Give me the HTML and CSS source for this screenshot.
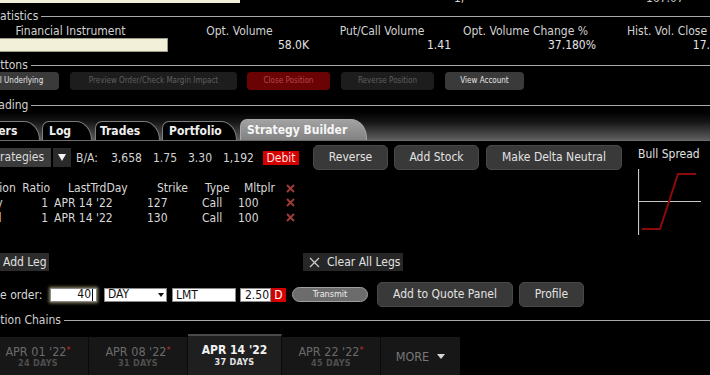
FILE: index.html
```html
<!DOCTYPE html>
<html>
<head>
<meta charset="utf-8">
<link rel="stylesheet" href="styles.css">
</head>
<body>
<div class="page">
  <div class="topstrip">
    <div class="cream-top"></div>
    <span class="top-clip tc1">1,</span>
    <span class="top-clip tc2">167.07</span>
  </div>

  <div class="section-head h-stats"><span class="sh-label">Statistics</span><span class="sh-line"></span></div>
  <div class="stats">
    <div class="st-h">Financial Instrument</div>
    <div class="st-h">Opt. Volume</div>
    <div class="st-h">Put/Call Volume</div>
    <div class="st-h">Opt. Volume Change %</div>
    <div class="st-h">Hist. Vol. Close</div>
    <div class="st-v"><div class="cream-field"></div></div>
    <div class="st-v">58.0K</div>
    <div class="st-v">1.41</div>
    <div class="st-v">37.180%</div>
    <div class="st-v">17.52%</div>
  </div>

  <div class="section-head h-buttons"><span class="sh-label">Buttons</span><span class="sh-line"></span></div>
  <div class="action-row">
    <div class="abtn abtn-on b1">Sell Underlying</div>
    <div class="abtn abtn-off b2">Preview Order/Check Margin Impact</div>
    <div class="abtn abtn-red b3">Close Position</div>
    <div class="abtn abtn-off b4">Reverse Position</div>
    <div class="abtn abtn-on b5">View Account</div>
  </div>

  <div class="section-head h-trading"><span class="sh-label">Trading</span><span class="sh-line"></span></div>
  <div class="tabstrip">
    <div class="tab t-orders">Orders</div>
    <div class="tab t-log">Log</div>
    <div class="tab t-trades">Trades</div>
    <div class="tab t-port">Portfolio</div>
    <div class="tab tab-active t-sb">Strategy Builder</div>
  </div>

  <div class="builder">
    <div class="builder-left">
      <div class="strat-row">
        <div class="strat-select">Strategies</div>
        <div class="strat-arrow"><span class="tri-white"></span></div>
        <span class="ba ba-label">B/A:</span>
        <span class="ba ba-1">3,658</span>
        <span class="ba ba-2">1.75</span>
        <span class="ba ba-3">3.30</span>
        <span class="ba ba-4">1,192</span>
        <span class="debit">Debit</span>
        <div class="sbtn s-rev">Reverse</div>
        <div class="sbtn s-add">Add Stock</div>
        <div class="sbtn s-mdn">Make Delta Neutral</div>
      </div>
      <div class="legs">
        <div class="lh c-act">Action</div>
        <div class="lh c-ratio">Ratio</div>
        <div class="lh c-date">LastTrdDay</div>
        <div class="lh c-strike">Strike</div>
        <div class="lh c-type">Type</div>
        <div class="lh c-mlt">Mltplr</div>
        <div class="lh c-x"><svg class="xicon" viewBox="0 0 9 9"><path d="M1 1L8 8M8 1L1 8"/></svg></div>

        <div class="lv c-act">Buy</div>
        <div class="lv c-ratio">1</div>
        <div class="lv c-date">APR 14 '22</div>
        <div class="lv c-strike">127</div>
        <div class="lv c-type">Call</div>
        <div class="lv c-mlt">100</div>
        <div class="lv c-x"><svg class="xicon" viewBox="0 0 9 9"><path d="M1 1L8 8M8 1L1 8"/></svg></div>

        <div class="lv c-act">Sell</div>
        <div class="lv c-ratio">1</div>
        <div class="lv c-date">APR 14 '22</div>
        <div class="lv c-strike">130</div>
        <div class="lv c-type">Call</div>
        <div class="lv c-mlt">100</div>
        <div class="lv c-x"><svg class="xicon" viewBox="0 0 9 9"><path d="M1 1L8 8M8 1L1 8"/></svg></div>
      </div>
    </div>
    <div class="builder-right">
      <div class="bull-label">Bull Spread</div>
      <svg class="payoff" width="64" height="66" viewBox="0 0 64 66">
        <line x1="0.5" y1="0" x2="0.5" y2="66" stroke="#c8c8c8" stroke-width="1.2"/>
        <line x1="0" y1="32.5" x2="63" y2="32.5" stroke="#c8c8c8" stroke-width="1.2"/>
        <polyline points="4,60 22,60 40,5 58,5" fill="none" stroke="#8e0a0a" stroke-width="2"/>
      </svg>
    </div>
  </div>

  <div class="leg-actions">
    <div class="addleg">Add Leg</div>
    <div class="clearlegs"><svg class="clr-x" viewBox="0 0 11 11"><path d="M1 1L10 10M10 1L1 10"/></svg><span>Clear All Legs</span></div>
  </div>

  <div class="order-row">
    <span class="order-label">Place order:</span>
    <div class="fld fld-qty">40<span class="caret"></span></div>
    <div class="fld fld-tif">DAY<span class="tri-black"></span></div>
    <div class="fld fld-type">LMT</div>
    <div class="fld fld-price">2.50</div><div class="fld-d">D</div>
    <div class="transmit">Transmit</div>
    <div class="sbtn o-quote">Add to Quote Panel</div>
    <div class="sbtn o-profile">Profile</div>
  </div>

  <div class="section-head h-chains"><span class="sh-label">Option Chains</span><span class="sh-line"></span></div>

  <div class="exp-tabs">
    <div class="exp e1"><div class="exp-date">APR 01 '22<span class="ast">*</span></div><div class="exp-days">24 DAYS</div></div>
    <div class="exp e2"><div class="exp-date">APR 08 '22<span class="ast">*</span></div><div class="exp-days">31 DAYS</div></div>
    <div class="exp exp-active e3"><div class="exp-date">APR 14 '22</div><div class="exp-days">37 DAYS</div></div>
    <div class="exp e4"><div class="exp-date">APR 22 '22<span class="ast">*</span></div><div class="exp-days">45 DAYS</div></div>
    <div class="exp exp-more e5">MORE<span class="tri-more"></span></div>
  </div>
</div>
</body>
</html>
```

FILE: styles.css
```css
html, body {
  margin: 0;
  padding: 0;
}
body {
  background: #000;
  width: 710px;
  height: 375px;
  overflow: hidden;
  font-family: "DejaVu Sans Condensed", "DejaVu Sans", sans-serif;
  font-stretch: condensed;
  font-size: 12px;
  color: #d8d8d8;
}
.page {
  width: 710px;
  display: flex;
  flex-direction: column;
}

/* top clipped strip */
.topstrip {
  height: 4px;
  overflow: hidden;
  display: flex;
  align-items: flex-end;
}
.cream-top {
  align-self: flex-start;
  width: 240px;
  height: 3px;
  background: #f3f0d9;
  flex: none;
}
.top-clip {
  line-height: 12px;
  color: #cfcfcf;
  flex: none;
}
.tc1 { margin-left: 214px; width: 20px; }
.tc2 { margin-left: 172px; }

/* section headings */
.section-head {
  display: flex;
  align-items: center;
  height: 14px;
}
.sh-label {
  line-height: 14px;
  color: #d0d0d0;
  white-space: nowrap;
  flex: none;
}
.sh-line {
  flex: 1;
  height: 1px;
  background: #a9a9a9;
  margin-left: 3px;
}
.h-stats { margin-top: 5px; }
.h-stats .sh-label { margin-left: -11px; }
.h-buttons { margin-top: 6px; }
.h-buttons .sh-label { margin-left: -14px; }
.h-trading { margin-top: 8px; }
.h-trading .sh-label { margin-left: -11px; }
.h-chains { margin-top: 6px; }
.h-chains .sh-label { margin-left: -15px; }

/* statistics */
.stats {
  margin-top: 1px;
  margin-left: -27px;
  display: grid;
  grid-template-columns: 195px 143px 142px 145px 138px;
  grid-template-rows: 14px 14px;
}
.st-h {
  line-height: 14px;
  text-align: center;
  color: #d2d2d2;
  white-space: nowrap;
}
.st-v {
  line-height: 14px;
  text-align: right;
  padding-right: 2px;
  color: #e4e4e4;
  white-space: nowrap;
}
.cream-field {
  height: 14px;
  box-sizing: border-box;
  background: #f3f0d9;
  border: 1px solid #9c9a8a;
  margin-right: -2px;
}

/* buttons section */
.action-row {
  display: flex;
  height: 18px;
}
.abtn {
  flex: none;
  height: 18px;
  line-height: 18px;
  border-radius: 4px;
  font-size: 8px;
  text-align: center;
  white-space: nowrap;
  overflow: hidden;
}
.abtn-on { background: #3a3a3a; color: #e6e6e6; }
.abtn-off { background: #1d1d1d; color: #5f5f5f; }
.abtn-red { background: #6a0404; color: #b94646; }
.b1 { margin-left: -27px; width: 86px; }
.b2 { margin-left: 11px; width: 167px; }
.b3 { margin-left: 10px; width: 83px; }
.b4 { margin-left: 11px; width: 93px; }
.b5 { margin-left: 11px; width: 79px; }

/* tabs */
.tabstrip {
  display: flex;
  align-items: flex-end;
  height: 28px;
  border-bottom: 1px solid #6c6c6c;
  background: linear-gradient(to bottom, #000 0%, #151515 35%, #5e5e5e 100%);
}
.tab {
  flex: none;
  box-sizing: border-box;
  height: 19px;
  line-height: 18px;
  padding-left: 6px;
  border: 1px solid #7d7d7d;
  border-bottom: none;
  border-radius: 7px 16px 0 0 / 7px 19px 0 0;
  background: #000;
  color: #efefef;
  font-weight: bold;
  white-space: nowrap;
}
.tab-active {
  height: 21px;
  line-height: 20px;
  background: linear-gradient(to bottom, #a2a2a2, #828282);
  border-color: #a8a8a8;
  color: #f6f6f6;
}
.t-orders { margin-left: -31px; width: 71px; }
.t-log { margin-left: 2px; width: 50px; }
.t-trades { margin-left: 3px; width: 65px; padding-left: 4px; }
.t-port { margin-left: 2px; width: 75px; }
.t-sb { margin-left: 3px; width: 127px; }

/* builder */
.builder {
  display: flex;
  margin-top: 4px;
}
.builder-left {
  width: 630px;
  flex: none;
}
.builder-right {
  margin-left: 8px;
  display: flex;
  flex-direction: column;
}
.strat-row {
  display: flex;
  align-items: center;
  height: 25px;
}
.strat-select {
  flex: none;
  margin-left: -17px;
  width: 68px;
  height: 19px;
  line-height: 19px;
  padding-left: 6px;
  box-sizing: border-box;
  background: #3b3b3b;
  color: #dcdcdc;
}
.strat-arrow {
  flex: none;
  margin-left: 2px;
  width: 18px;
  height: 19px;
  background: #2a2a2a;
  display: flex;
  align-items: center;
  justify-content: center;
}
.tri-white {
  width: 0;
  height: 0;
  border-left: 4px solid transparent;
  border-right: 4px solid transparent;
  border-top: 7px solid #f2f2f2;
}
.ba {
  flex: none;
  line-height: 14px;
  color: #d4d4d4;
  white-space: nowrap;
}
.ba-label { margin-left: 5px; width: 35px; }
.ba-1 { width: 42px; }
.ba-2 { width: 35px; }
.ba-3 { width: 35px; }
.ba-4 { width: 40px; }
.debit {
  flex: none;
  width: 36px;
  height: 14px;
  line-height: 14px;
  text-align: center;
  background: #d40000;
  color: #ffdede;
}
.sbtn {
  flex: none;
  height: 25px;
  line-height: 23px;
  box-sizing: border-box;
  border: 1px solid #484848;
  border-radius: 5px;
  background: #393939;
  color: #e2e2e2;
  text-align: center;
  white-space: nowrap;
}
.s-rev { margin-left: 14px; width: 75px; }
.s-add { margin-left: 6px; width: 85px; }
.s-mdn { margin-left: 7px; width: 136px; }

/* legs table */
.legs {
  margin-top: 11px;
  margin-left: -18px;
  display: grid;
  grid-template-columns: 34px 34px 85px 60px 43px 42px 20px;
  grid-template-rows: 14px 15px 15px;
}
.lh, .lv {
  white-space: nowrap;
  color: #d8d8d8;
  display: flex;
  align-items: center;
}
.c-ratio { justify-content: flex-end; }
.lv.c-ratio { padding-right: 2px; }
.lh.c-date { padding-left: 18px; }
.lv.c-date { padding-left: 4px; }
.lh.c-strike { padding-left: 22px; }
.lv.c-strike { padding-left: 12px; }
.lh.c-type { padding-left: 10px; }
.lv.c-type { padding-left: 7px; }
.lh.c-mlt { padding-left: 6px; }
.lv.c-mlt { padding-left: 0; }
.c-x { justify-content: center; }
.xicon {
  width: 9px;
  height: 9px;
  fill: none;
  stroke: #9e3a3a;
  stroke-width: 2;
}

.bull-label {
  margin-top: 2px;
  line-height: 14px;
  color: #e0e0e0;
  white-space: nowrap;
}
.payoff {
  margin-top: 8px;
  display: block;
}

/* leg actions */
.leg-actions {
  display: flex;
  margin-top: 18px;
  height: 18px;
}
.addleg {
  flex: none;
  margin-left: -10px;
  width: 59px;
  height: 18px;
  line-height: 18px;
  padding-left: 13px;
  box-sizing: border-box;
  background: #2c2c2c;
  color: #e0e0e0;
}
.clearlegs {
  flex: none;
  margin-left: 254px;
  width: 100px;
  height: 18px;
  background: #262626;
  display: flex;
  align-items: center;
  color: #e0e0e0;
}
.clr-x {
  width: 11px;
  height: 11px;
  margin-left: 6px;
  margin-right: 7px;
  fill: none;
  stroke: #cfcfcf;
  stroke-width: 1.2;
}

/* order row */
.order-row {
  display: flex;
  align-items: center;
  margin-top: 11px;
  height: 25px;
}
.order-label {
  flex: none;
  margin-left: -22px;
  width: 72px;
  white-space: nowrap;
  color: #d8d8d8;
}
.fld {
  flex: none;
  height: 14px;
  box-sizing: border-box;
  line-height: 13px;
  background: #fff;
  color: #111;
  border: 1px solid #8a8a8a;
  white-space: nowrap;
}
.fld-qty {
  width: 47px;
  text-align: right;
  padding-right: 3px;
  box-shadow: 0 0 3px 1px #8f8a68;
  display: flex;
  justify-content: flex-end;
  align-items: center;
}
.caret {
  display: inline-block;
  width: 1px;
  height: 12px;
  background: #000;
  margin-left: 1px;
}
.fld-tif {
  margin-left: 7px;
  width: 63px;
  padding-left: 3px;
  display: flex;
  align-items: center;
  justify-content: space-between;
  padding-right: 2px;
}
.tri-black {
  width: 0;
  height: 0;
  border-left: 3.5px solid transparent;
  border-right: 3.5px solid transparent;
  border-top: 4px solid #111;
}
.fld-type {
  margin-left: 5px;
  width: 64px;
  padding-left: 3px;
}
.fld-price {
  margin-left: 4px;
  width: 31px;
  text-align: right;
  padding-right: 1px;
}
.fld-d {
  flex: none;
  width: 15px;
  height: 14px;
  line-height: 14px;
  text-align: center;
  background: #d40000;
  color: #fff;
}
.transmit {
  flex: none;
  margin-left: 6px;
  width: 76px;
  height: 15px;
  line-height: 13px;
  box-sizing: border-box;
  border: 1px solid #a0a0a0;
  border-radius: 8px;
  background: #6c6c6c;
  color: #eeeeee;
  font-size: 9px;
  text-align: center;
}
.o-quote { margin-left: 9px; width: 136px; }
.o-profile { margin-left: 6px; width: 65px; }

/* expiry tabs */
.exp-tabs {
  display: flex;
  align-items: flex-end;
  margin-top: 7px;
  height: 41px;
}
.exp {
  flex: none;
  box-sizing: border-box;
  height: 38px;
  background: #171717;
  border-right: 1px solid #0a0a0a;
  padding-top: 7px;
  text-align: center;
  white-space: nowrap;
}
.e1 { margin-left: -12px; width: 101px; }
.e2 { width: 99px; }
.e3 { width: 94px; }
.e4 { width: 99px; }
.e5 { width: 79px; border-right: none; }
.exp-date {
  font-size: 12.5px;
  line-height: 13px;
  color: #6a6a6a;
}
.exp-days {
  font-size: 9px;
  line-height: 11px;
  font-weight: bold;
  color: #4e4e4e;
  letter-spacing: 0.3px;
}
.ast {
  color: #c42c2c;
  font-size: 9px;
  vertical-align: 3px;
}
.exp-active {
  height: 41px;
  background: #1f1f1f;
  border-top: 2px solid #4a4a4a;
  padding-top: 8px;
}
.exp-active .exp-date {
  color: #f2f2f2;
  font-weight: bold;
  font-size: 12px;
}
.exp-active .exp-days {
  color: #e2e2e2;
}
.exp-more {
  display: flex;
  align-items: center;
  justify-content: center;
  padding-top: 0;
  color: #777;
  font-size: 12.5px;
}
.tri-more {
  margin-left: 8px;
  width: 0;
  height: 0;
  border-left: 4px solid transparent;
  border-right: 4px solid transparent;
  border-top: 5px solid #d6d6d6;
}
```
